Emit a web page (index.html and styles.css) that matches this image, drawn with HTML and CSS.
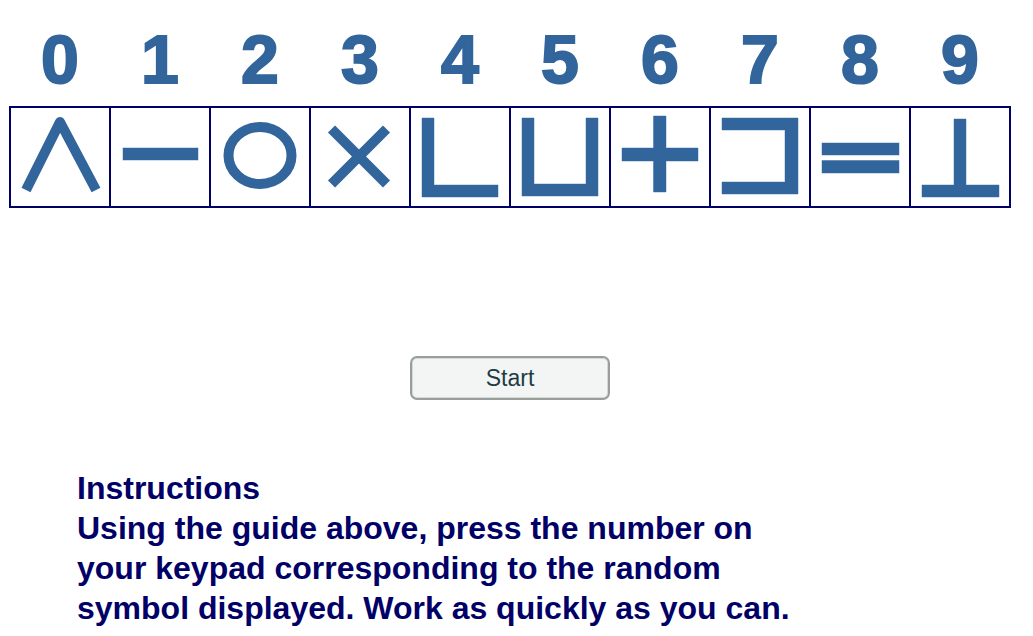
FILE: index.html
```html
<!DOCTYPE html>
<html lang="en">
<head>
<meta charset="utf-8">
<title>Symbol Coding</title>
<link rel="stylesheet" href="styles.css">
</head>
<body>
<div class="guide">
  <div class="digits">
    <span>0</span><span>1</span><span>2</span><span>3</span><span>4</span><span>5</span><span>6</span><span>7</span><span>8</span><span>9</span>
  </div>
  <div class="keys">
    <div class="key"><svg viewBox="0 0 98 98"><polyline class="ln" points="15,82 49,14 85,82" stroke-linejoin="round"/></svg></div>
    <div class="key"><svg viewBox="0 0 98 98"><rect class="sh" x="12" y="40" width="75" height="12"/></svg></div>
    <div class="key"><svg viewBox="0 0 98 98"><ellipse class="ln" cx="49" cy="47.5" rx="31.5" ry="28.5"/></svg></div>
    <div class="key"><svg viewBox="0 0 98 98"><line class="ln" x1="20.5" y1="21" x2="75.5" y2="76"/><line class="ln" x1="75.5" y1="21" x2="20.5" y2="76"/></svg></div>
    <div class="key"><svg viewBox="0 0 98 98"><path class="sh" d="M11 10H23V77H87V89H11Z"/></svg></div>
    <div class="key"><svg viewBox="0 0 98 98"><path class="sh" d="M11 10H23V76H75V10H87V88H11Z"/></svg></div>
    <div class="key"><svg viewBox="0 0 98 98"><path class="sh" d="M42.5 8H55V40H87V53H55V84H42.5V53H11V40H42.5Z"/></svg></div>
    <div class="key"><svg viewBox="0 0 98 98"><path class="sh" d="M11 10H87V86H11V74H74V22H11Z"/></svg></div>
    <div class="key"><svg viewBox="0 0 98 98"><rect class="sh" x="11" y="35" width="77" height="12"/><rect class="sh" x="11" y="52.5" width="77" height="12.5"/></svg></div>
    <div class="key"><svg viewBox="0 0 98 98"><path class="sh" d="M43 11H55V77H88V89H11V77H43Z"/></svg></div>
  </div>
  <div class="actions">
    <button class="start" type="button">Start</button>
  </div>
</div>
<section class="instructions">
  <h2>Instructions</h2>
  <p>Using the guide above, press the number on your keypad corresponding to the random symbol displayed. Work as quickly as you can.</p>
</section>
</body>
</html>
```
FILE: styles.css
```css
html, body {
  margin: 0;
  background: #ffffff;
  font-family: "Liberation Sans", Arial, sans-serif;
}

.guide {
  width: 1002px;
  margin-left: 9px;
}

.digits {
  display: flex;
  height: 68px;
  padding: 25px 1px 0;
  margin-bottom: 13px;
}

.digits span {
  width: 100px;
  text-align: center;
  font-size: 68px;
  line-height: 68px;
  font-weight: bold;
  color: #32659b;
  -webkit-text-stroke: 2px #32659b;
}

.keys {
  display: flex;
  border: 1px solid #000066;
}

.key {
  width: 98px;
  height: 98px;
  border: 1px solid #000066;
}

.key svg {
  display: block;
  width: 98px;
  height: 98px;
}

.sh {
  fill: #32659b;
  stroke: #9fbbd6;
  stroke-width: 1;
  paint-order: stroke;
}

.ln {
  fill: none;
  stroke: #32659b;
  stroke-width: 10;
}

.actions {
  display: flex;
  justify-content: center;
  margin-top: 148px;
}

.start {
  width: 200px;
  height: 44px;
  border: 2px solid #999e9b;
  border-radius: 7px;
  background: #f3f5f4;
  box-shadow: inset 0 0 0 1px #d2dad7;
  font-family: "Liberation Sans", Arial, sans-serif;
  font-size: 23px;
  color: #1d3c45;
  padding: 0;
}

.instructions {
  width: 735px;
  margin: 68px 0 0 77px;
  color: #000066;
  font-weight: bold;
  font-size: 32px;
  line-height: 40px;
}

.instructions h2,
.instructions p {
  margin: 0;
  font-size: inherit;
  font-weight: inherit;
}
```
